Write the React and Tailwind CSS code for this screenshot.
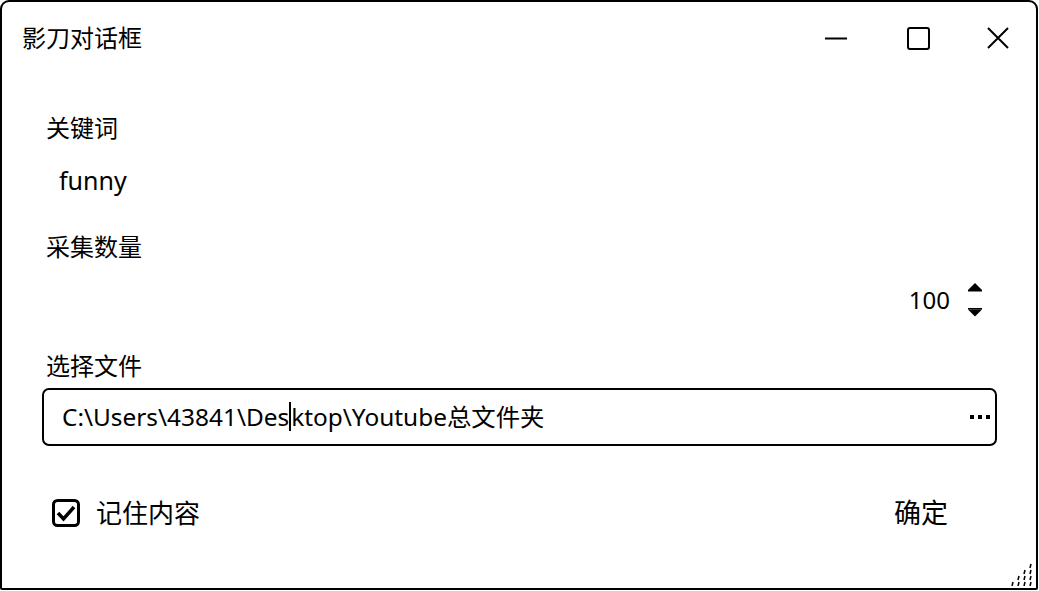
const FONT = "font-['Noto_Sans','Noto_Sans_CJK_SC',sans-serif]";

function TitleBar() {
  return (
    <div className="flex h-[72px] items-center justify-between">
      <div className="pl-[20px] text-[24px] leading-none text-black">影刀对话框</div>
      <div className="flex h-full items-center">
        {/* minimize */}
        <div className="flex h-full w-[80px] items-center justify-center">
          <svg width="22" height="22" viewBox="0 0 22 22">
            <path d="M0 11.5 H22" stroke="black" strokeWidth="2" />
          </svg>
        </div>
        {/* maximize */}
        <div className="flex h-full w-[84px] items-center justify-center">
          <svg width="23" height="23" viewBox="0 0 23 23">
            <rect x="1" y="1" width="21" height="21" rx="2" fill="none" stroke="black" strokeWidth="2" />
          </svg>
        </div>
        {/* close */}
        <div className="flex h-full w-[76px] items-center justify-center">
          <svg width="22" height="22" viewBox="0 0 22 22">
            <path d="M1 1 L21 21 M21 1 L1 21" stroke="black" strokeWidth="2" />
          </svg>
        </div>
      </div>
    </div>
  );
}

function Spinner() {
  return (
    <div className="flex flex-col items-center justify-between h-[34px] w-[18px]">
      <svg width="16" height="9" viewBox="0 0 16 9">
        <path d="M8 0 L15 7 L1 7 Z" fill="black" />
        <rect x="1" y="7" width="14" height="1.5" fill="black" />
      </svg>
      <svg width="16" height="9" viewBox="0 0 16 9">
        <rect x="1" y="0" width="14" height="1.5" fill="black" />
        <path d="M1 1.5 L15 1.5 L8 8.5 Z" fill="black" />
      </svg>
    </div>
  );
}

function ResizeGrip() {
  const dots = [
    [20, 2], [20, 8], [20, 14], [20, 20],
    [14, 8], [14, 14], [14, 20],
    [8, 14], [8, 20],
    [2, 20],
  ];
  return (
    <svg width="24" height="24" viewBox="0 0 24 24" className="absolute bottom-[2px] right-[2px]">
      {dots.map(([x, y], i) => (
        <path key={i} d={`M${x + 1} ${y} L${x} ${y + 4}`} stroke="black" strokeWidth="1.6" />
      ))}
    </svg>
  );
}

export default function App() {
  return (
    <div className={`${FONT} h-[591px] w-[1039px] bg-white text-black`}>
      <div className="relative flex h-[590px] w-[1038px] flex-col rounded-t-[9px] rounded-b-[2px] border-2 border-black bg-white">
        <TitleBar />

        <div className="flex flex-col pl-[44px] pr-[40px]">
          <div className="mt-[36px] flex h-[36px] items-center text-[24px]">关键词</div>

          <div className="mt-[17px] flex h-[36px] items-center pl-[13px] text-[25px]">funny</div>

          <div className="mt-[30px] flex h-[36px] items-center text-[24px]">采集数量</div>

          <div className="mt-[17px] flex h-[36px] items-center justify-end gap-[16px] pr-[12px]">
            <span className="text-[24px]">100</span>
            <Spinner />
          </div>

          <div className="mt-[30px] flex h-[36px] items-center text-[24px]">选择文件</div>

          <div className="mt-[4px] -ml-[4px] flex h-[58px] w-[955px] items-center justify-between rounded-[7px] border-2 border-black pl-[18px] pr-[5px]">
            <div className="flex items-center text-[24.4px]">
              <span>C:\Users\43841\Des</span>
              <span className="inline-block h-[29px] w-[2px] bg-black" />
              <span>ktop\Youtube总文件夹</span>
            </div>
            <div className="flex w-[20px] items-center gap-[4px]">
              <span className="h-[4px] w-[4px] bg-black" />
              <span className="h-[4px] w-[4px] bg-black" />
              <span className="h-[4px] w-[4px] bg-black" />
            </div>
          </div>

          <div className="mt-[49px] flex h-[36px] items-center justify-between">
            <div className="flex items-center">
              <svg width="28" height="28" viewBox="0 0 28 28" className="ml-[6px]">
                <rect x="1.5" y="1.5" width="25" height="25" rx="4" fill="white" stroke="black" strokeWidth="3" />
                <path d="M6 14 L11.5 20 L22 8" fill="none" stroke="black" strokeWidth="3.5" />
              </svg>
              <span className="ml-[16px] text-[26px]">记住内容</span>
            </div>
            <span className="mr-[48px] text-[27px]">确定</span>
          </div>
        </div>

        <ResizeGrip />
      </div>
    </div>
  );
}
